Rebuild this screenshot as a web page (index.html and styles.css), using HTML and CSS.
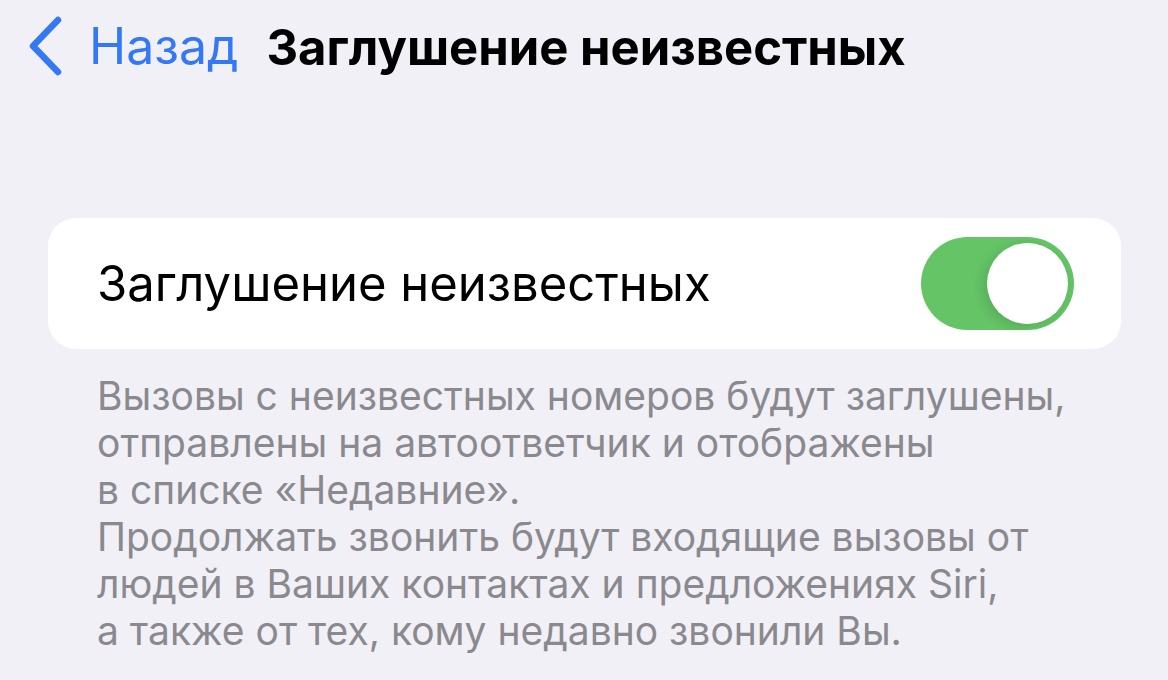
FILE: index.html
```html
<!doctype html>
<html>
    <head>
        <title>Заглушение неизвестных</title>
        <meta charset="utf-8">
        <link rel="stylesheet" href="styles.css">
    </head>

    <body>
        <header class="nav">
            <a class="back" href="#">
                <svg class="chevron" width="36" height="60" viewBox="0 0 36 60">
                    <path d="M31 4 L6 30 L31 56" fill="none" stroke="#3478f6" stroke-width="6.5" stroke-linecap="round" stroke-linejoin="round"/>
                </svg>
                <span>Назад</span>
            </a>
            <h1 class="title">Заглушение неизвестных</h1>
        </header>

        <section class="group">
            <div class="card">
                <span class="label">Заглушение неизвестных</span>
                <div class="switch on">
                    <div class="knob"></div>
                </div>
            </div>
            <p class="note">
                Вызовы с неизвестных номеров будут заглушены,<br>
                отправлены на автоответчик и отображены<br>
                в списке «Недавние».<br>
                Продолжать звонить будут входящие вызовы от<br>
                людей в Ваших контактах и предложениях Siri,<br>
                а также от тех, кому недавно звонили Вы.
            </p>
        </section>
    </body>
</html>
```

FILE: styles.css
```css
body{
    margin: 0px;
    padding: 0px;
    background: #f1f0f6;
    font-family: "Inter", "Liberation Sans", sans-serif;
    width: 1168px;
    height: 680px;
    overflow: hidden;
}

.nav{
    display: flex;
    align-items: center;
    height: 94px;
    padding-left: 27px;
}

.back{
    display: flex;
    align-items: center;
    gap: 26px;
    color: #3478f6;
    text-decoration: none;
    font-size: 50px;
    margin-top: -2px;
}

.chevron{
    display: block;
}

.title{
    margin: 0 0 0 28px;
    font-size: 49px;
    font-weight: 700;
    color: #000;
}

.group{
    padding: 124px 47px 0 48px;
}

.card{
    display: flex;
    align-items: center;
    justify-content: space-between;
    height: 131px;
    background: #fff;
    border-radius: 28px;
    padding: 0 47px 0 49px;
}

.label{
    font-size: 49px;
    color: #000;
}

.switch{
    position: relative;
    width: 153px;
    height: 93px;
    border-radius: 47px;
    background: #64c466;
}

.knob{
    position: absolute;
    top: 6px;
    right: 6px;
    width: 81px;
    height: 81px;
    border-radius: 50%;
    background: #fff;
    box-shadow: -4px 3px 12px rgba(0, 0, 0, 0.12);
}

.note{
    margin: 23px 0 0 49px;
    font-size: 39px;
    line-height: 47px;
    color: #8a898e;
}
```
